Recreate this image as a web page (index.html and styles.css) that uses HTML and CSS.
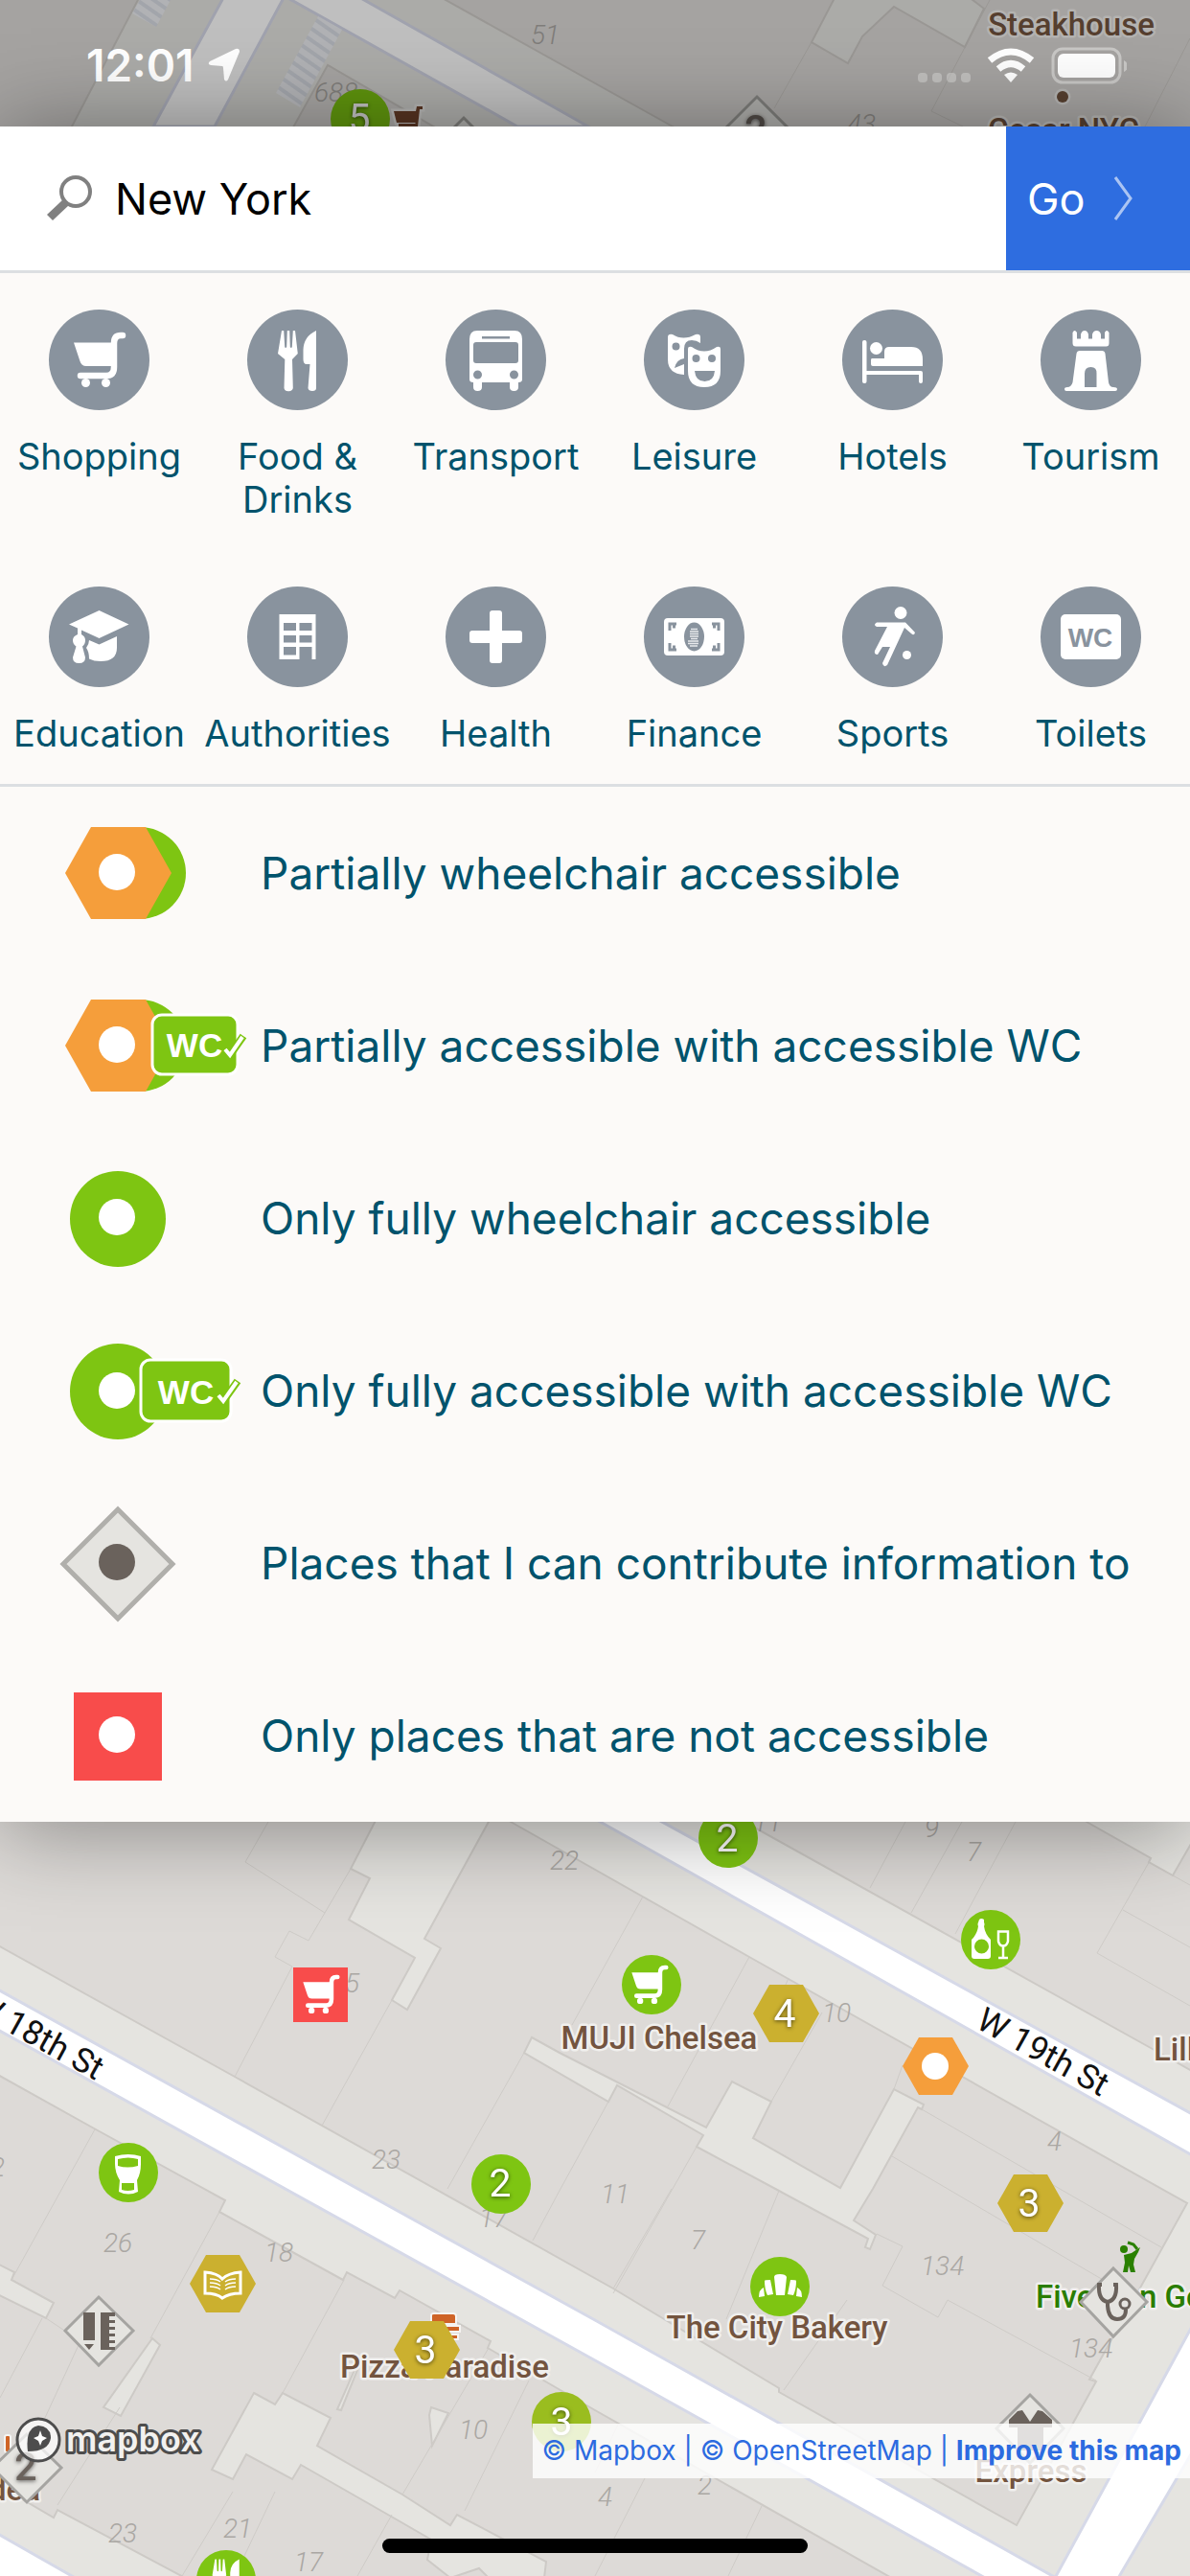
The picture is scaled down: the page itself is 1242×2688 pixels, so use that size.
FILE: index.html
```html
<!DOCTYPE html>
<html lang="en">
<head>
    <meta charset="UTF-8">
    <meta name="viewport" content="width=device-width, initial-scale=1.0">
    <title>Wheelmap</title>
    <link rel="stylesheet" href="styles.css">
</head>
<body>
    <!-- Shared icon shapes -->
    <svg class="sprite" aria-hidden="true">
        <symbol id="i-cart" viewBox="0 0 105 105">
            <path d="M26 34.5H66V59H39Q34 59 32.500 54Z"/>
            <path d="M77 27H75Q68 27 68 35V60Q68 69 60 69H33" fill="none" stroke="currentColor" stroke-width="6.500" stroke-linecap="round"/>
            <circle cx="38.500" cy="76.500" r="4.500"/>
            <circle cx="59.500" cy="76.500" r="4.500"/>
        </symbol>
        <symbol id="i-food" viewBox="0 0 105 105">
            <path d="M36 22h2.200l1 17q.8 2 2 0l.6-17h2.400l.6 17q1.200 2 2 0l1-17H50l2.800 24L47 52l.8 30q-.5 3-4.500 3.200T38.500 82L39.300 52 32 46Z"/>
            <path d="M72 22V82q0 3-4 3t-4.500-3L65.500 57H62q-3.500 0-3.500-5V42Q59 28 72 22Z"/>
        </symbol>
    </svg>

    <div class="map">
        <svg class="map-canvas" viewBox="0 0 1242 2688" preserveAspectRatio="xMidYMin slice" role="img" aria-label="Map of Chelsea, New York">
            <defs>
                <pattern id="hatch" width="10" height="10" patternUnits="userSpaceOnUse" patternTransform="rotate(-55)">
                    <rect width="10" height="10" fill="#eceef2"/>
                    <rect width="4" height="10" fill="#d9dce4"/>
                </pattern>
            </defs>

            <!-- Buildings -->
            <g class="buildings">
                <path d="M-4 -4H146L75 132L0 265H-4Z"/>
                <path d="M458 -4L702 132L1246 432V-4Z"/>
                <path d="M342 68L230 270H690Z"/>
                <path d="M660 1836L1201 2137L1246 2162V1800H660Z"/>
                <path d="M-4 1602L533 1901L782 2042L1239 2299L1137 2483L1144 2485L1061 2635L813 2496V2492L640 2388L245 2167L-4 2029Z"/>
                <path d="M-4 2164L100 2222L235 2296L229 2308L358 2379L362 2371L412 2398L417 2390L512 2443L509 2450L621 2515L934 2692H197L60 2619L56 2627L-4 2592Z"/>
            </g>
            <g class="yards">
                <path d="M872 -4L847 44L885 66L900 38L933 7L1007 49L1027 9L1010 -4Z"/>
                <path d="M1134 1901L1201 1939L1199 1943L1224 1957L1250 1912V1890H1120Z"/>
                <path d="M397 1890L366 1950L386 1960L364 2003L433 2043L409 2087L425 2097L460 2033L443 2023L516 1890Z"/>
                <path d="M555 2126L584 2142L737 2220L764 2172L805 2193L786 2231L877 2283L933 2180L964 2196L962 2201L958 2199L911 2284L891 2317L914 2332L908 2347L903 2345L906 2336L813 2286L727 2240L734 2228L644 2176L635 2193L547 2142Z"/>
                <path d="M-5 2361L15 2371L12 2379L56 2403L48 2419L-5 2393Z"/>
                <path d="M159 2440L167 2447L126 2521L108 2512Z"/>
                <path d="M265 2497L287 2509L295 2497L345 2523L331 2552L420 2603L470 2635L477 2624L570 2673L568 2690H510L500 2680L470 2690L446 2671L450 2650L412 2628L314 2572L305 2587L257 2561L243 2587L221 2577Z"/>
                <path d="M450 2512L468 2518L451 2552L448 2520Z"/>
                <path d="M373 2473L356 2515L352 2514L370 2473Z"/>
            </g>
            <path class="lots" d="M280 1901L256 1943L339 1996M366 1950L322 2025L302 2015L287 2042L305 2052L245 2167M409 2087L336 2218M547 2142L467 2284M671 1979L597 2113M782 2042L697 2198M858 2100L805 2193M823 2064L820 2071M942 2155L933 2180M945 1901L908 1970M1004 1901L951 1996M1060 1901L997 2018M1201 1940L1145 2038L1242 2093M1172 1993L1242 2032M1199 1943L1242 1967M962 2201L1212 2345M931 2250L1170 2390M635 2193L585 2284L556 2338M727 2240L640 2393M813 2286L758 2420M701 2284L640 2388M884 2400L818 2494M915 2331L942 2344L921 2385L979 2418L989 2400L1144 2484M99 2222L12 2379M229 2308L157 2440M359 2379L295 2497M44 2419L0 2502M48 2419L66 2431M82 2447L46 2525M125 2512L60 2614M552 2484L485 2620M510 2450L420 2603M409 2624L373 2688M287 2600L245 2688M243 2600L190 2688M1033 0L972 116L1005 132M847 44L808 113M1242 40L1195 132M673 2586L621 2688M795 2615L760 2688M645 2530L621 2580"/>

            <!-- Streets -->
            <g class="streets">
                <path d="M234 -4L160 132L224 132L297 -4Z"/>
                <path d="M297 -4L540 132L614 132L373 -4Z"/>
                <path d="M-4 1546L1246 2250V2207L-4 1518Z"/>
                <path d="M1246 2424L1100 2692H1166L1246 2556Z"/>
                <path d="M-4 2075L621 2421L1104 2691H1030L621 2463L-4 2117Z"/>
                <path d="M-4 2643L82 2692H-4Z"/>
            </g>
            <g fill="url(#hatch)">
                <path d="M146 0H178L163 28L138 14Z"/>
                <path d="M332 17L357 31L313 112L288 97Z"/>
            </g>

            <g class="house-numbers">
                <text x="554" y="46">51</text>
                <text x="328" y="106">688</text>
                <text x="884" y="139">43</text>
                <text x="574" y="1951">22</text>
                <text x="345" y="2079">25</text>
                <text x="388" y="2263">23</text>
                <text x="786" y="1911">11</text>
                <text x="965" y="1917">9</text>
                <text x="1009" y="1942">7</text>
                <text x="858" y="2110">10</text>
                <text x="1093" y="2244">4</text>
                <text x="627" y="2299">11</text>
                <text x="721" y="2347">7</text>
                <text x="500" y="2324">17</text>
                <text x="276" y="2360">18</text>
                <text x="108" y="2350">26</text>
                <text x="479" y="2545">10</text>
                <text x="233" y="2648">21</text>
                <text x="113" y="2653">23</text>
                <text x="307" y="2683">17</text>
                <text x="961" y="2374">134</text>
                <text x="1116" y="2460">134</text>
                <text x="728" y="2603">2</text>
                <text x="624" y="2615">4</text>
                <text x="-10" y="2271">2</text>
            </g>

            <g class="street-names">
                <text transform="translate(-32 2098) rotate(29)">W 18th St</text>
                <text transform="translate(1017 2115) rotate(29)">W 19th St</text>
            </g>

            <g class="place-names">
                <text x="1118" y="37" text-anchor="middle">Steakhouse</text>
                <text x="1110" y="147" text-anchor="middle">Cesar NYC</text>
                <circle cx="1109" cy="101" r="6"/>
                <text x="688" y="2138" text-anchor="middle">MUJI Chelsea</text>
                <text x="811" y="2440" text-anchor="middle">The City Bakery</text>
                <text x="464" y="2481" text-anchor="middle">Pizza Paradise</text>
                <text x="1076" y="2590" text-anchor="middle">Express</text>
                <text x="1204" y="2150">Lillie's</text>
                <text x="-12" y="2609">dea</text>
                <text class="park-name" x="1081" y="2408">Five Iron Golf</text>
            </g>
            <g class="poi-food">
                <path d="M450 2416q0-2 3-2h20q3 0 3 3v8h-26zM456 2427h24v6h-24zM468 2436h10v5h-10z"/>
                <rect x="5" y="2541" width="6" height="18" rx="2"/>
            </g>
            <g class="poi-golf">
                <circle cx="1173" cy="2347" r="4"/>
                <path d="M1173 2353L1181 2351L1187 2347L1190 2345L1188 2350L1184 2357L1183 2363L1185 2371H1180L1178 2364L1177 2371H1172L1174 2361Z"/>
                <path d="M1187 2347L1183 2342L1177 2340" fill="none" stroke="#2a8000" stroke-width="3"/>
            </g>
            <path class="poi-cart" d="M411 116H434L435 111H441V114H438L436 132H416V129H433L434 128H414Z"/>

            <!-- Map markers -->
            <g class="marker green">
                <circle cx="376" cy="124" r="31"/>
                <circle cx="760" cy="1918" r="31"/>
                <circle cx="680" cy="2071" r="31"/>
                <circle cx="1034" cy="2024" r="31"/>
                <circle cx="523" cy="2279" r="31"/>
                <circle cx="134" cy="2267" r="31"/>
                <circle cx="814" cy="2386" r="31"/>
                <circle cx="236" cy="2692" r="31"/>
                <circle class="lime" cx="586" cy="2527" r="31"/>
            </g>
            <g class="marker ochre">
                <path d="M786 2101L803 2071H838L855 2101L838 2131H803Z"/>
                <path d="M1041 2299L1058 2269H1093L1110 2299L1093 2329H1058Z"/>
                <path d="M411 2452L428 2422H463L480 2452L463 2482H428Z"/>
                <path d="M198 2383L215 2353H250L267 2383L250 2413H215Z"/>
                <path class="orange" d="M942 2156L959 2126H994L1011 2156L994 2186H959Z"/>
            </g>
            <circle cx="976" cy="2156" r="14" fill="#fff"/>
            <rect x="306" y="2053" width="57" height="57" fill="#f84c4b"/>
            <g class="marker grey">
                <path d="M790 101L827 138L790 175L753 138Z"/>
                <path d="M484 123L521 160L484 197L447 160Z"/>
                <path d="M103 2397L139 2432L103 2468L68 2432Z"/>
                <path d="M1162 2367L1197 2402L1162 2438L1128 2402Z"/>
                <path d="M1075 2499L1110 2534L1075 2570L1040 2534Z"/>
                <path d="M28 2540L64 2575L28 2611L-8 2575Z"/>
            </g>
            <g class="marker-icon">
                <use href="#i-cart" x="298" y="2044" width="74" height="74"/>
                <use href="#i-cart" x="641" y="2034" width="74" height="74"/>
                <use href="#i-food" x="199" y="2655" width="74" height="74"/>
                <!-- bottle and glass -->
                <path fill-rule="evenodd" d="M1022 2003q2-2 5 0v3q1 2 0 4 1 8 7 14v17q0 3-3 3h-14q-3 0-3-3v-17q6-6 7-14-1-2 0-4zM1017 2031a7.500 7.500 0 1 0 15 0a7.500 7.500 0 1 0-15 0"/>
                <path d="M1042 2015.500h10v10q-1 5-5 5t-5-5zM1047 2030v12M1042 2043h10" fill="none" stroke="#fff" stroke-width="2.500"/>
                <!-- beer glass -->
                <path fill-rule="evenodd" d="M120 2250q14-4 27 0v8q0 10-4 17l1 12q-10 5-20 0l1-12q-5-8-5-17zM123 2253v7q10 3 21 0v-7q-10-3-21 0M127 2278v7q6 2 13 0v-7z"/>
                <!-- open book -->
                <path d="M214 2371q13 1 18 7 6-6 19-7v22q-12 0-19 5-6-5-18-5z" fill="none" stroke="#fff" stroke-width="3"/>
                <path d="M219 2378q7 0 11 3m-11 1q7 0 11 3m-11 1q7 0 11 3M246 2378q-7 0-11 3m11 1q-7 0-11 3m11 1q-7 0-11 3" fill="none" stroke="#fff" stroke-width="1.500"/>
                <!-- croissant -->
                <path d="M808 2376q0-3 6-3t7 3l-2 19h-9zM798 2380q0-1 6-1l3 15-6 1q-3-6-3-15zM831 2380q0-1-6-1l-3 15 6 1q3-6 3-15zM797 2387l1 9-6 1q0-8 5-10zM832 2387l-1 9 6 1q0-8-5-10z"/>
            </g>
            <g class="marker-icon dark">
                <path d="M87 2413h12v29H87zM88 2446h10l-5 6z"/>
                <path d="M105 2413h15v4h-6v4h6v3h-6v4h6v3h-6v4h6v3h-6v4h6v3h-6v4h6v3h-15z"/>
                <path d="M1150 2384h-3q-1 16 9 18 10-2 9-18h-3M1156 2402v4q1 14 10 14t9-10" fill="none" stroke="#6a625c" stroke-width="4"/>
                <circle cx="1174" cy="2404" r="5" fill="none" stroke="#6a625c" stroke-width="3"/>
                <path d="M1062 2516l5-1 8 12 8-12 5 1 10 9v8h-9v24h-27v-24h-9v-8z"/>
            </g>
            <g class="cluster">
                <text x="375" y="137">5</text>
                <text x="759" y="1932">2</text>
                <text x="819" y="2115">4</text>
                <text x="522" y="2292">2</text>
                <text x="1074" y="2313">3</text>
                <text x="444" y="2466">3</text>
                <text x="586" y="2541">3</text>
            </g>
            <g class="cluster dark">
                <text x="789" y="149">2</text>
                <text x="27" y="2588">2</text>
            </g>
        </svg>
    </div>

    <div class="app">
        <header class="status-bar">
            <span class="time">12:01</span>
            <svg class="location" width="34" height="36" viewBox="0 0 34 36"><path d="M33 4Q33 0 29 1L2 14Q-1 17 3 18L15 19Q16 19 16 21L17 33Q19 36 21 33Z" fill="#fff"/></svg>
            <svg class="status-icons" width="218" height="42" viewBox="0 0 218 42" aria-label="Wi-Fi, battery full">
                <g fill="#fff" opacity=".3">
                    <rect x="0" y="29" width="10" height="10" rx="4"/>
                    <rect x="15" y="29" width="10" height="10" rx="4"/>
                    <rect x="30" y="29" width="10" height="10" rx="4"/>
                    <rect x="45" y="29" width="10" height="10" rx="4"/>
                </g>
                <g fill="none" stroke="#fff" stroke-width="7">
                    <path d="M75 16Q97 -2 119 16"/>
                    <path d="M84 25Q97 14 110 25"/>
                </g>
                <path d="M90 31Q97 26 104 31L97 39Z" fill="#fff"/>
                <rect x="141" y="4" width="70" height="35" rx="10" fill="none" stroke="#fff" stroke-opacity=".4" stroke-width="3"/>
                <rect x="146" y="9" width="60" height="25" rx="6" fill="#fff"/>
                <path d="M215 16q4 2 4 6t-4 6z" fill="#fff" opacity=".4"/>
            </svg>
        </header>

        <main class="panel">
            <form class="search" role="search">
                <label class="search-label" for="place">
                    <svg width="50" height="50" viewBox="0 0 50 50" aria-label="Search"><circle cx="31" cy="18" r="15" fill="none" stroke="#808080" stroke-width="4"/><path d="M18 26L24 32L7 48L1 42Z" fill="#808080"/></svg>
                </label>
                <input id="place" type="text" value="New York">
                <button class="go" type="button">Go
                    <svg width="22" height="50" viewBox="0 0 22 50" aria-hidden="true"><path d="M3 3L19 25L3 47" fill="none" stroke="#fff" stroke-opacity=".6" stroke-width="3"/></svg>
                </button>
            </form>

            <nav class="categories">
                <a href="#shopping">
                    <svg class="round-icon" viewBox="0 0 105 105"><use href="#i-cart"/></svg>
                    Shopping
                </a>
                <a href="#food">
                    <svg class="round-icon" viewBox="0 0 105 105"><use href="#i-food"/></svg>
                    Food &amp; Drinks
                </a>
                <a href="#transport">
                    <svg class="round-icon" viewBox="0 0 105 105"><path fill-rule="evenodd" d="M33 22H72Q80 22 80 31V73Q80 76 76 76V81Q76 85 71.500 85T67 81V76H38V81Q38 85 33.500 85T29 81V76Q25 76 25 73V31Q25 22 33 22ZM38 28V30.500H67V28ZM32 34Q29 34 29 37V53Q29 56 32 56H73Q76 56 76 53V37Q76 34 73 34ZM29 68a4.500 4.500 0 1 0 9 0a4.500 4.500 0 1 0-9 0M67 68a4.500 4.500 0 1 0 9 0a4.500 4.500 0 1 0-9 0"/></svg>
                    Transport
                </a>
                <a href="#leisure">
                    <svg class="round-icon" viewBox="0 0 105 105"><path fill-rule="evenodd" d="M25 29q0-4 5-3 11 7 24 0 5-1 5 3v6q-4-3-9-3-8 0-8 9V51q-8 1-10 10l10-4V68Q25 67 25 52ZM29.500 38.500a4 4 0 1 0 8 0a4 4 0 1 0-8 0"/><path fill-rule="evenodd" d="M46 41q0-3 4-2 13 9 26 0 4-1 4 2V64Q80 81 63 81T46 64ZM50.500 51a4 4 0 1 0 8 0a4 4 0 1 0-8 0M67 51a4 4 0 1 0 8 0a4 4 0 1 0-8 0M53 64Q54 75 63.500 75T74 64Z"/></svg>
                    Leisure
                </a>
                <a href="#hotels">
                    <svg class="round-icon" viewBox="0 0 105 105"><rect x="21" y="32" width="4.500" height="45" rx="2"/><circle cx="35.500" cy="40.500" r="6.500"/><path d="M31 51H44V44Q44 39 49 39H72Q84 39 84 52V59H32Q30 59 30 57V53Q30 51 31 51ZM22 64H82Q84 64 84 66V75Q84 77 82 77T80 75V68H22Z"/></svg>
                    Hotels
                </a>
                <a href="#tourism">
                    <svg class="round-icon" viewBox="0 0 105 105"><path fill-rule="evenodd" d="M33.500 24q2-4 4.500 0v6.500h4V26q1-4 4-4t4 4v4.500h4V26q1-4 4.500-4t4.500 4v4.500h4V24q2-4 4.500 0v11q0 3.500-3 3.500H37q-3.500 0-3.500-3.500zM41 43H64Q67 43 67.500 46L71 76Q72 81 76 81 80 81 80 83T78 85H27Q25 85 25 83T28 81Q32 81 33.500 76L37.500 46Q38 43 41 43ZM46 81V67Q46 60 52.500 60T58.500 67V81Z"/></svg>
                    Tourism
                </a>
                <a href="#education">
                    <svg class="round-icon" viewBox="0 0 105 105"><path d="M52.500 25L83.500 39.500L52.500 54L34 45.500V50Q38 52 38 56 38 60 35 62.500L38 74Q38 80 31.500 80T25 74L28.500 62.500Q25 60 25 56 25 52 30 50V43.500L21 39.500Z"/><path d="M42 56L52.500 60.500L71 52V64Q71 78 54 78 47 78 42 75.500 42 68 39 64 42 60 42 56Z"/></svg>
                    Education
                </a>
                <a href="#authorities">
                    <svg class="round-icon" viewBox="0 0 105 105"><path fill-rule="evenodd" d="M33.500 29H71.500V76H67.500V63H54.500V76H33.500ZM38 38V46H51V38ZM54.500 38V46H67.500V38ZM38 51V58.500H51V51ZM54.500 51V58.500H67.500V51ZM38 63V71.500H51V63Z"/></svg>
                    Authorities
                </a>
                <a href="#health">
                    <svg class="round-icon" viewBox="0 0 105 105"><rect x="46" y="25" width="13" height="55" rx="3"/><rect x="25" y="46" width="55" height="13" rx="3"/></svg>
                    Health
                </a>
                <a href="#finance">
                    <svg class="round-icon" viewBox="0 0 105 105"><rect x="21" y="33" width="63" height="39" rx="4"/><ellipse cx="52.500" cy="52.500" rx="10.500" ry="15" fill="#89939e"/><path d="M49 44.500h7m-8 2.500h9m-9 2.500h9m-9 2.500h9m-8 2.500h7m-10 2.500h11m-11 2.500h11m-9 2.500h8" stroke="#fff" stroke-width="1.500" stroke-opacity=".8"/><path d="M27 46V39H34M71 39H78V46M27 59V66H34M71 66H78V59M30 42h3M72 42h3M30 63h3M72 63h3" fill="none" stroke="#89939e" stroke-width="3"/></svg>
                    Finance
                </a>
                <a href="#sports">
                    <svg class="round-icon" viewBox="0 0 105 105"><circle cx="61" cy="27.500" r="6.500"/><circle cx="67.500" cy="71.500" r="4.500"/><path d="M36 37.500H66L76 48Q75 52 72 49L65 43 47 82Q43 85 42 80L50 63H42L37 71Q33 71 34 67L47 42H36Q32 40 36 37.500Z"/></svg>
                    Sports
                </a>
                <a href="#toilets">
                    <svg class="round-icon" viewBox="0 0 105 105"><rect x="21" y="29" width="63" height="47" rx="5"/><text class="wc" x="52" y="63">WC</text></svg>
                    Toilets
                </a>
            </nav>

            <div class="filters">
                <button type="button">
                    <svg viewBox="0 0 272 180"><circle cx="146" cy="90" r="48" fill="#7ec512"/><path d="M68 90L95 42H152L179 90L152 138H95Z" fill="#f59e3b"/><circle cx="122" cy="89" r="19" fill="#fff"/></svg>
                    Partially wheelchair accessible
                </button>
                <button type="button">
                    <svg viewBox="0 0 272 180"><circle cx="146" cy="90" r="48" fill="#7ec512"/><path d="M68 90L95 42H152L179 90L152 138H95Z" fill="#f59e3b"/><circle cx="122" cy="89" r="19" fill="#fff"/>
                        <g transform="translate(159 58)"><rect width="89" height="62" rx="10" fill="#7ec512" stroke="#fff" stroke-width="3"/><path d="M76 36L81 42L95 22" fill="none" stroke="#7ec512" stroke-width="8"/><path d="M76 36L81 42L94 23" fill="none" stroke="#fff" stroke-width="4"/><text class="badge-wc" x="44" y="44">WC</text></g>
                    </svg>
                    Partially accessible with accessible WC
                </button>
                <button type="button">
                    <svg viewBox="0 0 272 180"><circle cx="123" cy="91" r="50" fill="#7ec512"/><circle cx="122" cy="89" r="19" fill="#fff"/></svg>
                    Only fully wheelchair accessible
                </button>
                <button type="button">
                    <svg viewBox="0 0 272 180"><circle cx="123" cy="91" r="50" fill="#7ec512"/><circle cx="122" cy="90" r="19" fill="#fff"/>
                        <g transform="translate(147 58)"><rect width="94" height="64" rx="10" fill="#7ec512" stroke="#fff" stroke-width="3"/><path d="M81 37L86 43L101 22" fill="none" stroke="#7ec512" stroke-width="8"/><path d="M81 37L86 43L100 23" fill="none" stroke="#fff" stroke-width="4"/><text class="badge-wc" x="47" y="46">WC</text></g>
                    </svg>
                    Only fully accessible with accessible WC
                </button>
                <button type="button">
                    <svg viewBox="0 0 272 180"><path d="M123 34L180 91L123 148L66 91Z" fill="#e5e4e0" stroke="#b0afab" stroke-width="5"/><circle cx="122" cy="89" r="19" fill="#6a625c"/></svg>
                    Places that I can contribute information to
                </button>
                <button type="button">
                    <svg viewBox="0 0 272 180"><rect x="77" y="45" width="92" height="92" fill="#f84c4b"/><circle cx="122" cy="89" r="19" fill="#fff"/></svg>
                    Only places that are not accessible
                </button>
            </div>
        </main>

        <footer class="map-footer">
            <a class="mapbox-logo" href="#mapbox" aria-label="Mapbox">
                <svg width="210" height="62" viewBox="0 0 210 62">
                    <circle cx="26" cy="31" r="22" fill="#fff" fill-opacity=".7" stroke="#4d4d4d" stroke-width="3"/>
                    <path d="M15 43Q12 18 26 16Q39 17 39 29Q37 43 15 43Z" fill="#4d4d4d"/>
                    <path d="M28 21L30 27L35 29L30 32L28 37L26 32L21 29L26 27Z" fill="#fff"/>
                    <text x="55" y="43">mapbox</text>
                </svg>
            </a>
            <p class="attribution">
                <a href="#mapbox">© Mapbox</a> | <a href="#osm">© OpenStreetMap</a> | <a class="improve" href="#improve">Improve this map</a>
            </p>
        </footer>
        <div class="home-bar"></div>
    </div>
</body>
</html>
```

FILE: styles.css
```css
* {
    margin: 0;
    padding: 0;
    box-sizing: border-box;
}

body {
    position: relative;
    min-height: 100vh;
    font-family: Inter, 'Liberation Sans', sans-serif;
    background: #e5e4e0;
}

a {
    color: inherit;
    text-decoration: none;
}

button,
input {
    border: none;
    background: none;
    font: inherit;
    color: inherit;
}

.sprite {
    position: absolute;
    width: 0;
    height: 0;
}

/* Map */
.map {
    position: absolute;
    inset: 0;
    overflow: hidden;
}

.map-canvas {
    display: block;
    width: 100%;
    height: 100%;
    font-family: Roboto, sans-serif;
}

.buildings path {
    fill: #dddad7;
    stroke: #cdcac6;
    stroke-width: 2;
}

.yards path {
    fill: #e5e4e0;
    stroke: #cdcac6;
    stroke-width: 2;
}

.lots {
    fill: none;
    stroke: #cecbc7;
    stroke-width: 1;
}

.streets path {
    fill: #fff;
    stroke: #d6d9e8;
    stroke-width: 3;
}

.house-numbers {
    font-size: 28px;
    font-style: italic;
    font-weight: 300;
    fill: #aaa7a3;
}

.street-names {
    font-size: 35px;
    fill: #111;
}

.place-names {
    font-size: 33px;
    font-weight: 500;
    fill: #73543f;
    stroke: #f0efed;
    stroke-width: 5;
    stroke-linejoin: round;
    paint-order: stroke;
}

.park-name {
    fill: #2a7d00;
}

.poi-food {
    fill: #cf6427;
    stroke: #f5f4f2;
    stroke-width: 2;
}

.poi-golf {
    fill: #2a8000;
}

.poi-cart {
    fill: #73452d;
    stroke: #f0efed;
    stroke-width: 5;
    paint-order: stroke;
}

.marker.green {
    fill: #7ec512;
}

.marker .lime {
    fill: #9abd1f;
}

.marker.ochre {
    fill: #cbb02f;
}

.marker .orange {
    fill: #f59e3b;
}

.marker.grey {
    fill: #e5e4e0;
    stroke: #a5a4a1;
    stroke-width: 3;
}

.marker-icon {
    color: #fff;
    fill: #fff;
}

.marker-icon.dark {
    fill: #6a625c;
}

.cluster {
    font-size: 41px;
    text-anchor: middle;
    fill: #fff;
    filter: drop-shadow(0 1px 2px rgba(0, 0, 0, 0.6));
}

.cluster.dark {
    font-weight: 500;
    fill: #6a625c;
}

/* Layers above the map */
.app {
    position: relative;
    display: flex;
    flex-direction: column;
    min-height: 100vh;
    overflow: hidden;
}

.status-bar {
    display: flex;
    align-items: center;
    height: 132px;
    padding: 4px 66px 0 90px;
    background: rgba(0, 0, 0, 0.25);
    color: #fff;
}

.time {
    font-size: 46px;
    font-weight: 600;
}

.location {
    margin-left: 14px;
}

.status-icons {
    margin-left: auto;
}

.panel {
    position: relative;
    background: #fcfaf8;
    box-shadow: 0 6px 90px rgba(0, 0, 0, 0.4);
}

.search {
    display: flex;
    align-items: stretch;
    height: 153px;
    border-bottom: 3px solid #dcdfe2;
    background: #fff;
    font-size: 45px;
}

.search-label {
    display: flex;
    align-items: center;
    padding: 0 22px 0 48px;
}

.search input {
    flex: 1;
    min-width: 0;
}

.search input:focus {
    outline: none;
}

.go {
    display: flex;
    align-items: center;
    gap: 28px;
    width: 192px;
    padding-left: 22px;
    background: #2e6de0;
    color: #fff;
}

.categories {
    display: grid;
    grid-template-columns: repeat(6, minmax(0, 1fr));
    border-bottom: 3px solid #dcdfe2;
    font-size: 38px;
    line-height: 45px;
    text-align: center;
    color: #00536c;
}

.categories a {
    display: flex;
    flex-direction: column;
    align-items: center;
    gap: 26px;
    padding: 38px 0 30px;
}

.round-icon {
    flex: none;
    width: 105px;
    height: 105px;
    border-radius: 50%;
    background: #89939e;
    color: #fff;
    fill: #fff;
}

.wc,
.badge-wc {
    font-family: 'Liberation Sans', sans-serif;
    font-weight: 700;
    text-anchor: middle;
}

.wc {
    font-size: 28px;
    fill: #89939e;
}

.badge-wc {
    font-size: 35px;
    fill: #fff;
}

.filters button {
    display: flex;
    align-items: center;
    width: 100%;
    height: 180px;
    font-size: 46px;
    text-align: left;
    color: #00536c;
}

.filters svg {
    flex: none;
    width: 272px;
    height: 180px;
}

.map-footer {
    display: flex;
    align-items: flex-end;
    justify-content: space-between;
    margin-top: auto;
    padding-left: 14px;
}

.mapbox-logo {
    height: 71px;
}

.mapbox-logo text {
    font-size: 36px;
    font-weight: 600;
    fill: #f2f1ef;
    stroke: #4d4d4d;
    stroke-width: 6;
    stroke-linejoin: round;
    paint-order: stroke;
}

.attribution {
    padding: 0 9px;
    background: rgba(255, 255, 255, 0.8);
    font-size: 28px;
    line-height: 57px;
    color: #2c6be0;
}

.improve {
    font-weight: 700;
}

.home-bar {
    align-self: center;
    width: 444px;
    height: 15px;
    margin: 63px 0 24px;
    border-radius: 8px;
    background: #000;
}
```
